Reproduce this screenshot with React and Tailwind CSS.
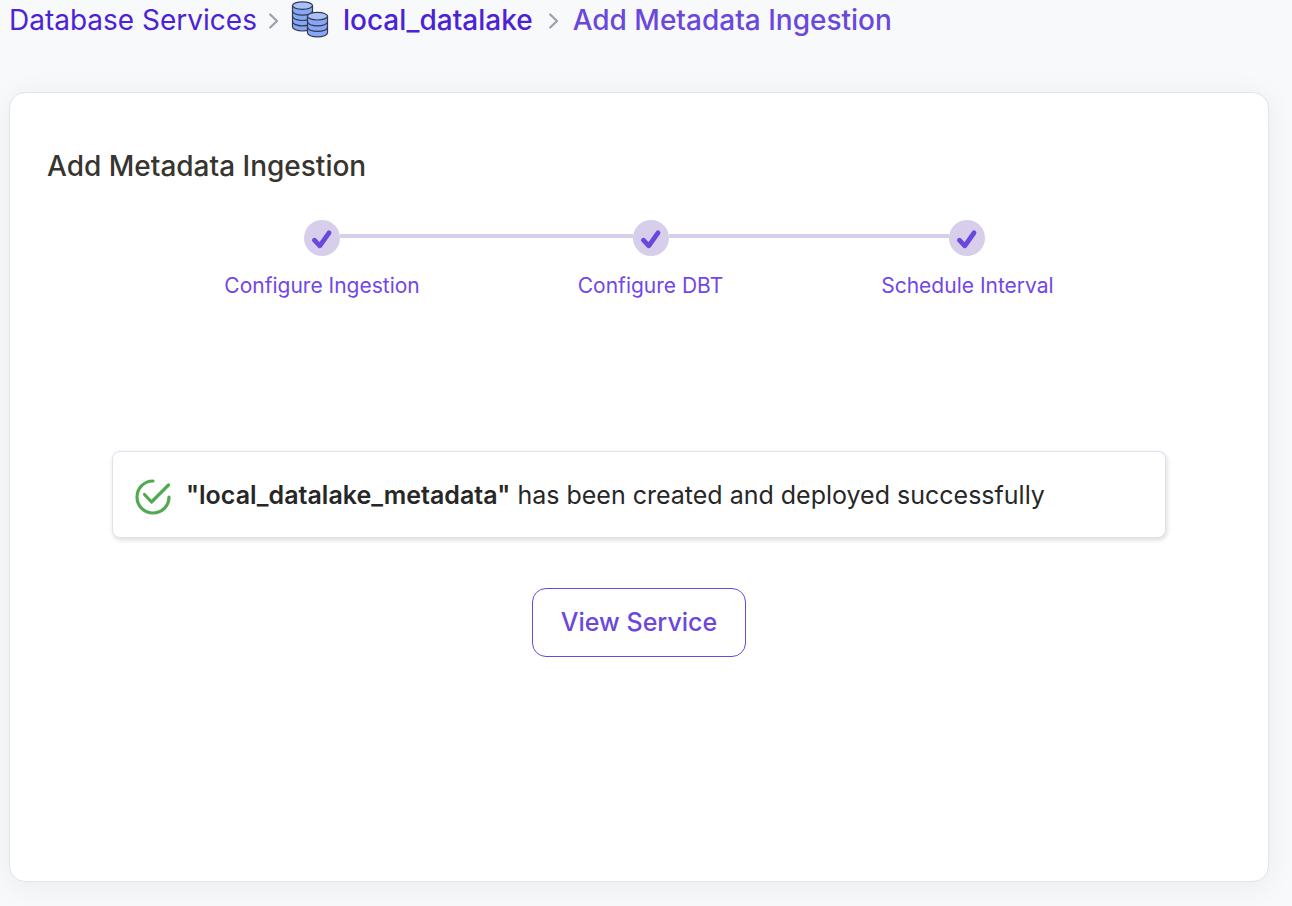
const steps = ['Configure Ingestion', 'Configure DBT', 'Schedule Interval'];

function Chevron() {
  return (
    <svg className="h-[18px] w-3 shrink-0" viewBox="0 0 12 18" fill="none" stroke="#9ca3af" strokeWidth="2.3" strokeLinecap="round" strokeLinejoin="round" aria-hidden="true">
      <path d="M3.2 3.5l6.8 6.5-6.8 6.5" />
    </svg>
  );
}

function DatabaseIcon() {
  return (
    <svg className="h-[38px] w-[38px] shrink-0" viewBox="0 0 38 38" stroke="#343a4c" strokeWidth="1.2" aria-hidden="true">
      <path d="M1.5 4.6v21.2c0 2.4 4.5 4.2 10 4.2s10-1.8 10-4.2V4.6z" fill="#86a6f6" />
      <ellipse cx="11.5" cy="4.6" rx="10" ry="3.8" fill="#a9c1fa" />
      <path d="M1.5 10c0 2.4 4.5 4.2 10 4.2s10-1.8 10-4.2M1.5 15.3c0 2.4 4.5 4.2 10 4.2s10-1.8 10-4.2M1.5 20.6c0 2.4 4.5 4.2 10 4.2s10-1.8 10-4.2" fill="none" />
      <path d="M16.5 15.2v16.5c0 2.4 4.5 4.2 10 4.2s10-1.8 10-4.2V15.2z" fill="#86a6f6" />
      <ellipse cx="26.5" cy="15.2" rx="10" ry="3.8" fill="#a9c1fa" />
      <path d="M16.5 20.7c0 2.4 4.5 4.2 10 4.2s10-1.8 10-4.2M16.5 26.2c0 2.4 4.5 4.2 10 4.2s10-1.8 10-4.2" fill="none" />
    </svg>
  );
}

function Step({ label, first, last }) {
  return (
    <li className="flex flex-col">
      <div className="flex items-center">
        <span className={first ? 'h-1 flex-1' : 'mb-1 h-1 flex-1 bg-[#d7ceec]'} />
        <span className="flex size-9 items-center justify-center rounded-full bg-[#d7ceec]">
          <svg className="size-9" viewBox="0 0 36 36" fill="none" stroke="#6b48dc" strokeWidth="4.8" strokeLinecap="round" strokeLinejoin="round" aria-hidden="true">
            <path d="M10.4 20.2l5.4 5.6L25 12.8" />
          </svg>
        </span>
        <span className={last ? 'h-1 flex-1' : 'mb-1 h-1 flex-1 bg-[#d7ceec]'} />
      </div>
      <span className="mt-4 px-[79px] text-[21px] leading-7 text-[#7147e8]">{label}</span>
    </li>
  );
}

export default function App() {
  return (
    <div className="min-h-screen bg-[#f8f9fb] pr-[23px] pb-6 pl-[9px] font-['Inter',sans-serif]">
      <nav aria-label="Breadcrumb" className="flex h-10 items-center text-[28px] leading-10 whitespace-nowrap">
        <a href="#services" className="mr-[10px] text-[#4c22d6]">Database Services</a>
        <Chevron />
        <span className="mr-[14px] ml-3 flex"><DatabaseIcon /></span>
        <a href="#local_datalake" className="mr-[14px] font-medium text-[#4c22d6]">local_datalake</a>
        <Chevron />
        <span aria-current="page" className="ml-[14px] font-medium text-[#6b48dc]">Add Metadata Ingestion</span>
      </nav>

      <main className="mt-[52px] rounded-2xl border border-[#e2e4ea] bg-white px-[37px] pt-[53px] pb-[224px] shadow-[0_4px_30px_rgba(0,0,0,0.06)]">
        <h1 className="text-[28px] leading-10 font-medium text-[#37352f]">Add Metadata Ingestion</h1>

        <ol className="mt-[34px] flex justify-center whitespace-nowrap">
          {steps.map((label, i) => (
            <Step key={label} label={label} first={i === 0} last={i === steps.length - 1} />
          ))}
        </ol>

        <div role="status" className="mx-[65px] mt-[151px] flex items-center rounded-lg border border-[#dce3ec] bg-white px-[22px] pt-[22px] pb-[22px] shadow-[1px_2px_5px_rgba(0,0,0,0.15)]">
          <svg className="mt-[5px] mr-[15px] size-9 shrink-0" viewBox="0 0 36 36" fill="none" stroke="#51a951" strokeWidth="3.2" strokeLinecap="round" strokeLinejoin="round" aria-hidden="true">
            <path d="M18 2A16 16 0 1 0 34 18" />
            <path d="M9.5 15.5l7 7.5L33.5 6" />
          </svg>
          <p className="text-[25px] leading-9 text-[#272727]">
            <span className="font-semibold">"local_datalake_metadata"</span> has been created and deployed successfully
          </p>
        </div>

        <div className="mt-[50px] flex justify-center">
          <button type="button" className="rounded-[14px] border border-[#6b48dc] px-7 py-4 text-[25px] leading-[35px] font-medium text-[#6b48dc]">
            View Service
          </button>
        </div>
      </main>
    </div>
  );
}
